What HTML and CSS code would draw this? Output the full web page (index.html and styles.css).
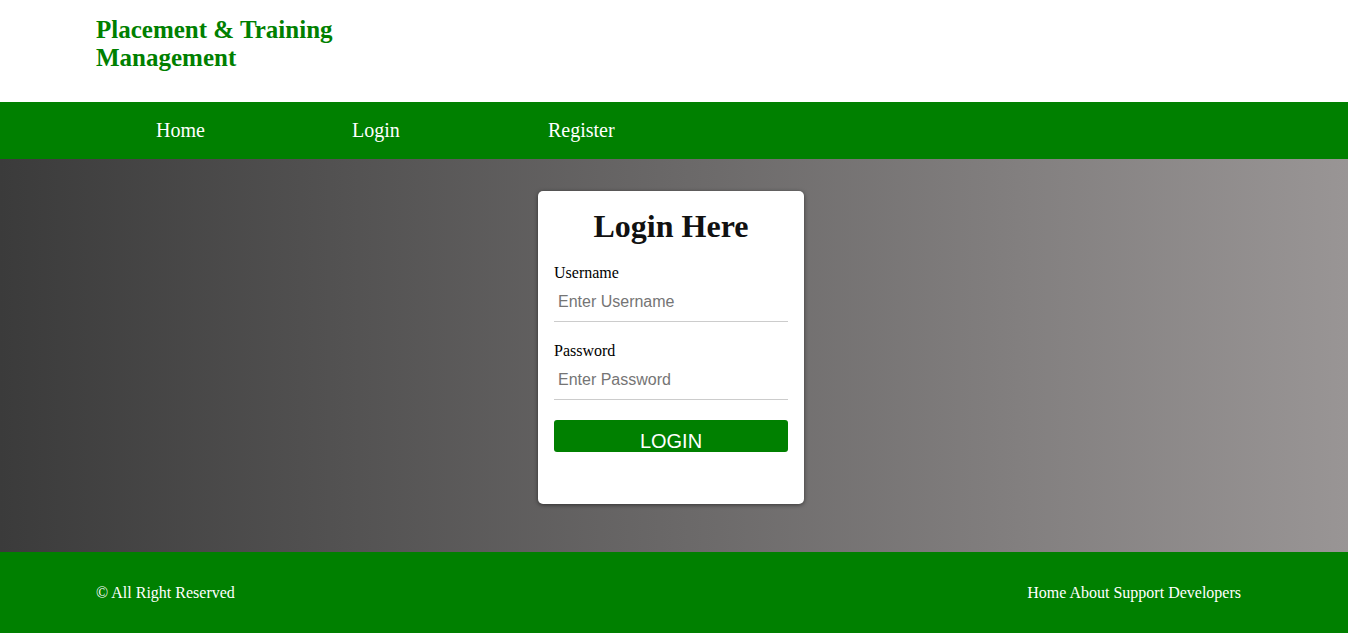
FILE: index.html
```html
<!DOCTYPE html>
<html>
<head>
<meta charset="utf-8">
<link rel="stylesheet" href="styles.css">
</head>
<body>
<header class="header">
  <h1 class="brand">Placement &amp; Training Management</h1>
</header>
<nav class="nav">
  <a class="nav-link" href="#">Home</a>
  <a class="nav-link" href="#">Login</a>
  <a class="nav-link" href="#">Register</a>
</nav>
<main class="main">
  <form class="card">
    <h2 class="card-title">Login Here</h2>
    <label class="field-label">Username</label>
    <input class="field-input" type="text" placeholder="Enter Username">
    <label class="field-label">Password</label>
    <input class="field-input" type="password" placeholder="Enter Password">
    <button class="btn" type="button">LOGIN</button>
  </form>
</main>
<footer class="footer">
  <span class="copy">© All Right Reserved</span>
  <span class="footer-links">Home About Support Developers</span>
</footer>
</body>
</html>
```
FILE: styles.css
```css
html, body {
  margin: 0;
  padding: 0;
  background: #fff;
  font-family: "Liberation Serif", "Times New Roman", serif;
}
.header {
  height: 102px;
  box-sizing: border-box;
  padding: 16px 0 0 96px;
}
.brand {
  margin: 0;
  width: 270px;
  font-size: 25px;
  line-height: 28px;
  font-weight: bold;
  color: #008000;
}
.nav {
  height: 57px;
  background: #008000;
  display: flex;
  align-items: center;
  padding-left: 156px;
}
.nav-link {
  width: 196px;
  color: #fff;
  text-decoration: none;
  font-size: 20px;
}
.main {
  height: 393px;
  background: linear-gradient(to right, #3b3b3b, #999595);
  display: flex;
  justify-content: center;
  align-items: flex-start;
  padding-top: 32px;
  box-sizing: border-box;
}
.card {
  width: 266px;
  height: 313px;
  box-sizing: border-box;
  background: #fff;
  border-radius: 5px;
  box-shadow: 0 1px 4px rgba(0,0,0,0.5);
  padding: 16px;
  margin-right: 6px;
  display: flex;
  flex-direction: column;
}
.card-title {
  margin: 0 0 19px;
  text-align: center;
  font-size: 32px;
  line-height: 38px;
  color: #111;
}
.field-label {
  font-size: 16px;
  line-height: 18px;
  color: #000;
}
.field-input {
  box-sizing: border-box;
  border: none;
  border-bottom: 1px solid #ccc;
  outline: none;
  height: 40px;
  padding: 0 4px;
  font-family: "Liberation Sans", Arial, sans-serif;
  font-size: 16px;
  margin-bottom: 20px;
}
.field-input::placeholder {
  color: #757575;
}
.btn {
  height: 32px;
  border: none;
  border-radius: 3px;
  background: #008000;
  color: #fff;
  font-family: "Liberation Sans", Arial, sans-serif;
  font-size: 20px;
  padding: 8px 0 0;
  line-height: 26px;
}
.footer {
  height: 81px;
  background: #008000;
  color: #fff;
  display: flex;
  justify-content: space-between;
  align-items: center;
  padding: 0 107px 0 96px;
  font-size: 16px;
  margin-bottom: 7px;
}
```
